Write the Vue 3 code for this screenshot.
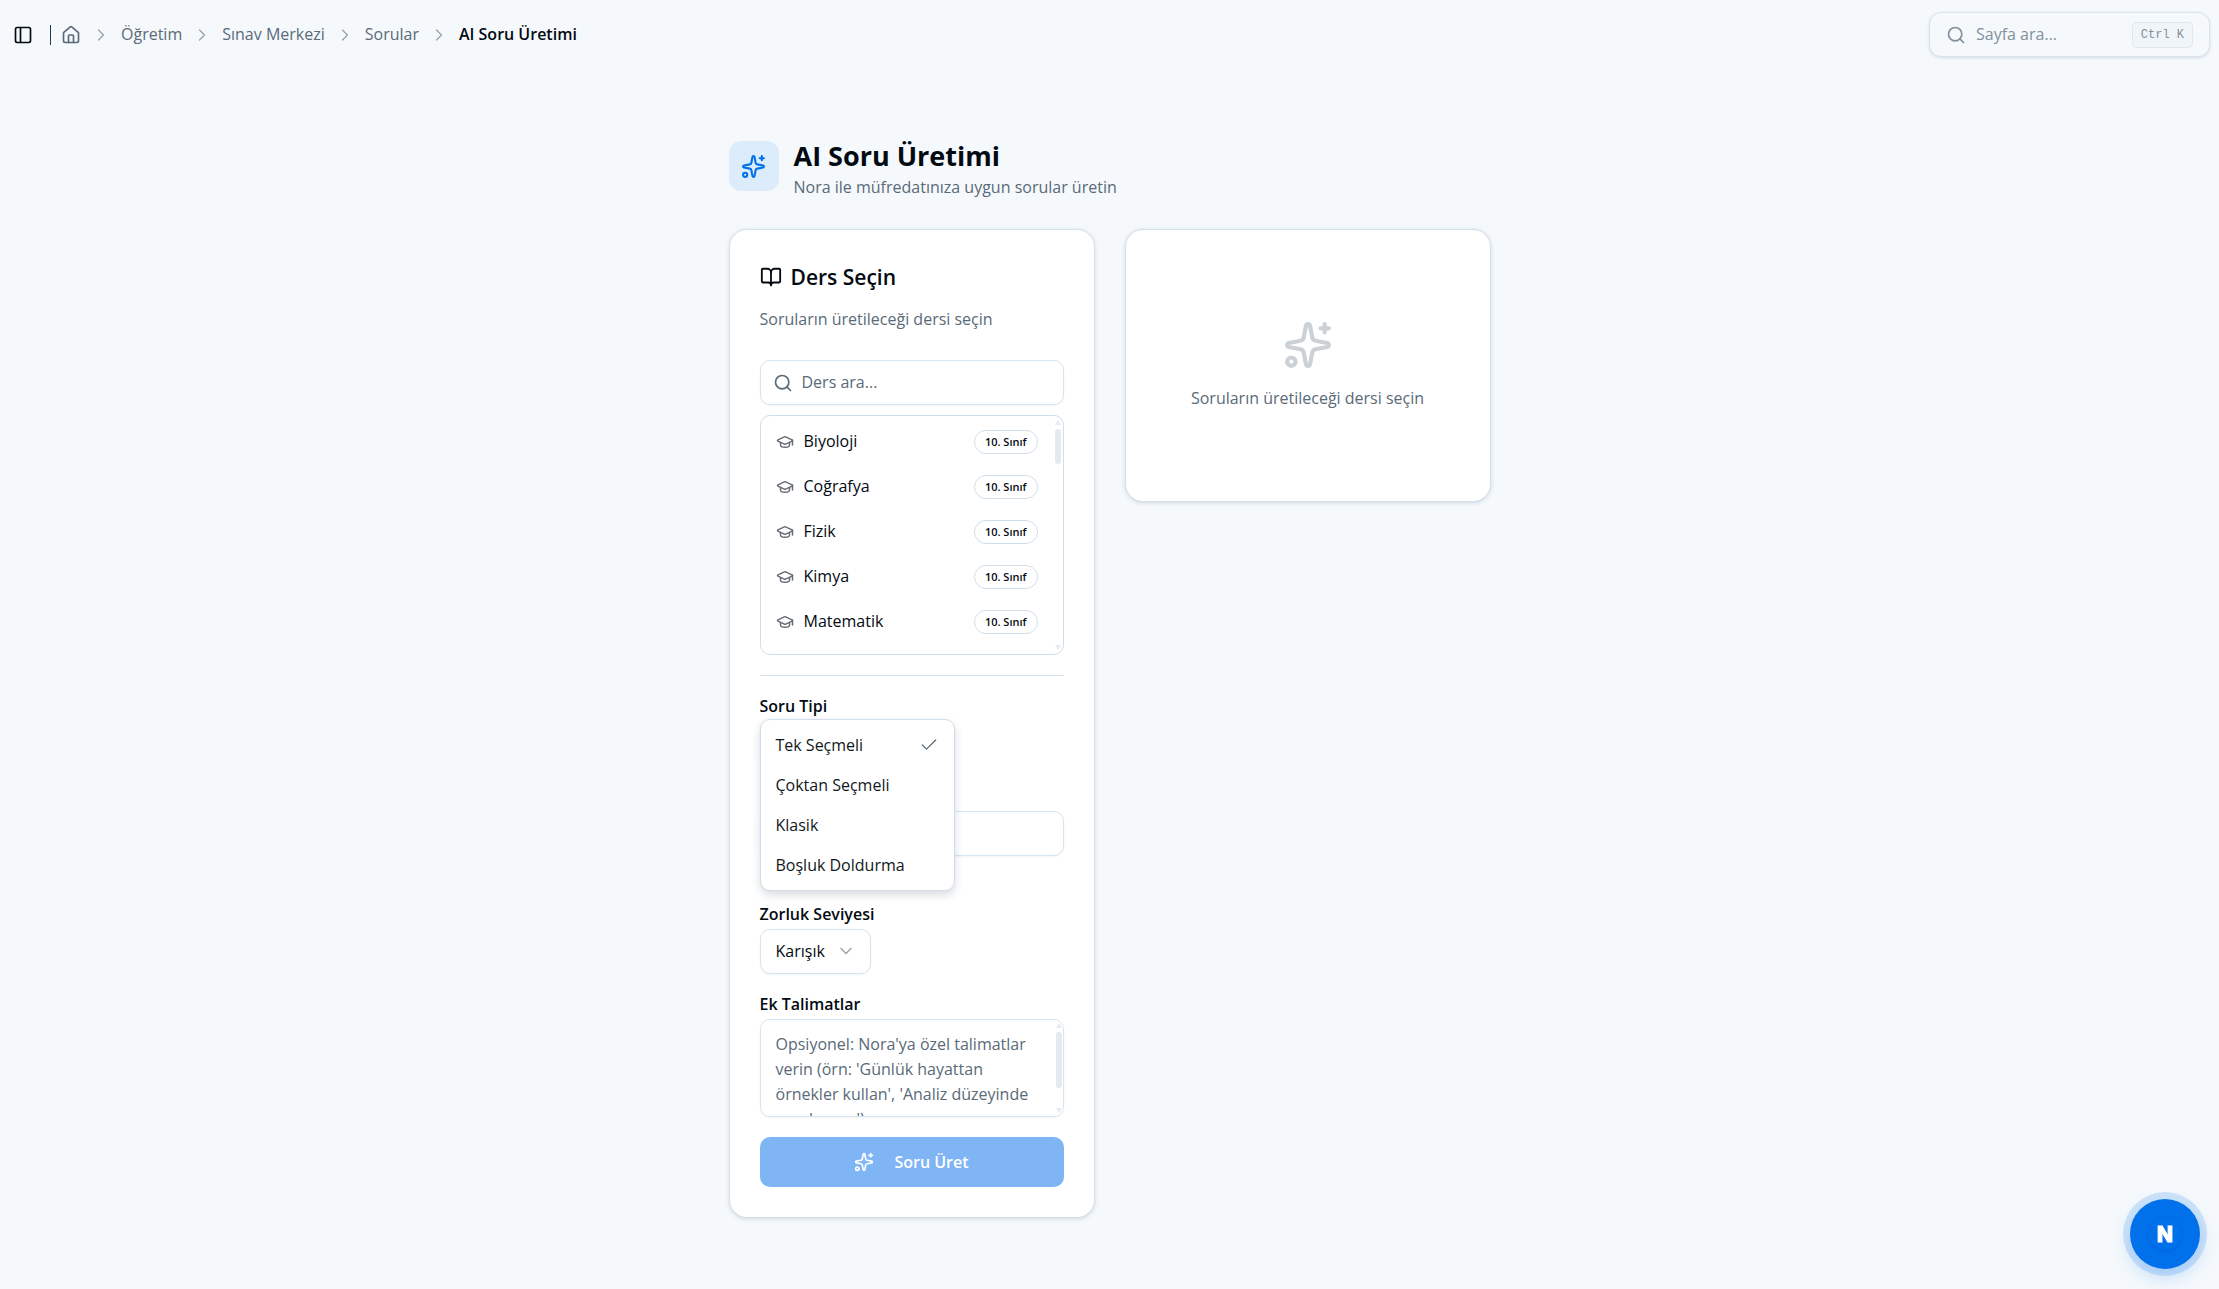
<script setup>
import { ref, computed } from 'vue'

const crumbs = ['Öğretim', 'Sınav Merkezi', 'Sorular']

const lessons = [
  { name: 'Biyoloji', grade: '10. Sınıf' },
  { name: 'Coğrafya', grade: '10. Sınıf' },
  { name: 'Fizik', grade: '10. Sınıf' },
  { name: 'Kimya', grade: '10. Sınıf' },
  { name: 'Matematik', grade: '10. Sınıf' }
]

const questionTypes = ['Tek Seçmeli', 'Çoktan Seçmeli', 'Klasik', 'Boşluk Doldurma']

const search = ref('')
const selectedLesson = ref(null)
const questionType = ref('Tek Seçmeli')
const typeMenuOpen = ref(true)
const questionCount = ref('')
const difficulty = ref('Karışık')
const instructions = ref('')

const filteredLessons = computed(() => {
  const term = search.value.toLocaleLowerCase('tr')
  return lessons.filter((l) => l.name.toLocaleLowerCase('tr').includes(term))
})

function pickType(type) {
  questionType.value = type
  typeMenuOpen.value = false
}
</script>

<template>
  <div class="app">
    <!-- shared icon shapes -->
    <svg class="sprite" aria-hidden="true">
      <symbol id="i-sparkles" viewBox="0 0 24 24">
        <path d="M11.017 2.814a1 1 0 0 1 1.966 0l1.051 5.558a2 2 0 0 0 1.594 1.594l5.558 1.051a1 1 0 0 1 0 1.966l-5.558 1.051a2 2 0 0 0-1.594 1.594l-1.051 5.558a1 1 0 0 1-1.966 0l-1.051-5.558a2 2 0 0 0-1.594-1.594l-5.558-1.051a1 1 0 0 1 0-1.966l5.558-1.051a2 2 0 0 0 1.594-1.594z" />
        <path d="M20 2v4M22 4h-4" />
        <circle cx="4" cy="20" r="2" />
      </symbol>
      <symbol id="i-search" viewBox="0 0 24 24">
        <circle cx="11" cy="11" r="8" />
        <path d="m21 21-4.3-4.3" />
      </symbol>
      <symbol id="i-chevron" viewBox="0 0 24 24">
        <path d="m9 18 6-6-6-6" />
      </symbol>
      <symbol id="i-cap" viewBox="0 0 24 24">
        <path d="M21.42 10.922a1 1 0 0 0-.019-1.838L12.83 5.18a2 2 0 0 0-1.66 0L2.6 9.08a1 1 0 0 0 0 1.832l8.57 3.908a2 2 0 0 0 1.66 0z" />
        <path d="M22 10v6" />
        <path d="M6 12.5V16a6 3 0 0 0 12 0v-3.5" />
      </symbol>
    </svg>

    <header class="topbar">
      <button class="icon-btn" aria-label="Kenar çubuğu">
        <svg class="icon" viewBox="0 0 24 24">
          <rect width="18" height="18" x="3" y="3" rx="2" />
          <path d="M9 3v18" />
        </svg>
      </button>
      <span class="divider"></span>
      <nav class="crumbs">
        <a href="#" class="crumb" aria-label="Ana sayfa">
          <svg class="icon" viewBox="0 0 24 24">
            <path d="M15 21v-8a1 1 0 0 0-1-1h-4a1 1 0 0 0-1 1v8" />
            <path d="M3 10a2 2 0 0 1 .709-1.528l7-5.999a2 2 0 0 1 2.582 0l7 5.999A2 2 0 0 1 21 10v9a2 2 0 0 1-2 2H5a2 2 0 0 1-2-2z" />
          </svg>
        </a>
        <template v-for="crumb in crumbs" :key="crumb">
          <svg class="icon crumb-sep"><use href="#i-chevron" /></svg>
          <a href="#" class="crumb">{{ crumb }}</a>
        </template>
        <svg class="icon crumb-sep"><use href="#i-chevron" /></svg>
        <span class="crumb-current" aria-current="page">AI Soru Üretimi</span>
      </nav>
      <button class="page-search">
        <svg class="icon"><use href="#i-search" /></svg>
        <span class="page-search-text">Sayfa ara...</span>
        <kbd>Ctrl K</kbd>
      </button>
    </header>

    <main class="content">
      <div class="page-head">
        <div class="page-icon">
          <svg class="icon icon-md"><use href="#i-sparkles" /></svg>
        </div>
        <div>
          <h1>AI Soru Üretimi</h1>
          <p class="page-sub">Nora ile müfredatınıza uygun sorular üretin</p>
        </div>
      </div>

      <div class="columns">
        <section class="card">
          <h2>
            <svg class="icon icon-book" viewBox="0 0 24 24">
              <path d="M12 7v14" />
              <path d="M3 18a1 1 0 0 1-1-1V4a1 1 0 0 1 1-1h5a4 4 0 0 1 4 4 4 4 0 0 1 4-4h5a1 1 0 0 1 1 1v13a1 1 0 0 1-1 1h-6a3 3 0 0 0-3 3 3 3 0 0 0-3-3z" />
            </svg>
            Ders Seçin
          </h2>
          <p class="card-sub">Soruların üretileceği dersi seçin</p>

          <label class="control lesson-search">
            <svg class="icon"><use href="#i-search" /></svg>
            <input v-model="search" type="text" placeholder="Ders ara..." aria-label="Ders ara" />
          </label>

          <div class="lesson-list">
            <button
              v-for="lesson in filteredLessons"
              :key="lesson.name"
              class="lesson"
              @click="selectedLesson = lesson.name"
            >
              <svg class="icon icon-cap"><use href="#i-cap" /></svg>
              <span class="lesson-name">{{ lesson.name }}</span>
              <span class="badge">{{ lesson.grade }}</span>
            </button>
            <div class="scroll" aria-hidden="true">
              <span class="arrow-up"></span>
              <span class="thumb thumb-list"></span>
              <span class="arrow-down"></span>
            </div>
          </div>

          <hr />

          <form class="form" @submit.prevent>
            <div class="field type-field">
              <label for="question-type">Soru Tipi</label>
              <button
                id="question-type"
                type="button"
                class="control type-trigger"
                aria-haspopup="listbox"
                :aria-expanded="typeMenuOpen"
                @click="typeMenuOpen = !typeMenuOpen"
              >
                <span v-if="!typeMenuOpen">{{ questionType }}</span>
              </button>
              <div v-if="typeMenuOpen" class="menu" role="listbox">
                <button
                  v-for="type in questionTypes"
                  :key="type"
                  type="button"
                  class="menu-item"
                  role="option"
                  :aria-selected="type === questionType"
                  @click="pickType(type)"
                >
                  {{ type }}
                  <svg v-if="type === questionType" class="icon" viewBox="0 0 24 24">
                    <path d="M20 6 9 17l-5-5" />
                  </svg>
                </button>
              </div>
            </div>

            <div class="count-field">
              <input v-model="questionCount" class="control" type="text" inputmode="numeric" aria-label="Soru sayısı" />
            </div>

            <div class="field">
              <label for="difficulty">Zorluk Seviyesi</label>
              <div class="select-wrap">
                <select id="difficulty" v-model="difficulty" class="control">
                  <option>Karışık</option>
                </select>
                <svg class="icon select-arrow"><use href="#i-chevron" /></svg>
              </div>
            </div>

            <div class="field">
              <label for="instructions">Ek Talimatlar</label>
              <div class="textarea-wrap">
                <textarea
                  id="instructions"
                  v-model="instructions"
                  class="control"
                  placeholder="Opsiyonel: Nora'ya özel talimatlar verin (örn: 'Günlük hayattan örnekler kullan', 'Analiz düzeyinde sorular sor')"
                ></textarea>
                <div class="scroll" aria-hidden="true">
                  <span class="arrow-up"></span>
                  <span class="thumb thumb-text"></span>
                  <span class="arrow-down"></span>
                </div>
              </div>
            </div>

            <button class="submit" :disabled="!selectedLesson">
              <svg class="icon"><use href="#i-sparkles" /></svg>
              Soru Üret
            </button>
          </form>
        </section>

        <section class="card empty">
          <svg class="icon icon-lg"><use href="#i-sparkles" /></svg>
          <p>Soruların üretileceği dersi seçin</p>
        </section>
      </div>
    </main>

    <button class="fab" aria-label="Nora">
      <span class="fab-inner">N</span>
    </button>
  </div>
</template>

<style>
body {
  background: #f5f9fc;
}
</style>

<style scoped>
.app {
  min-height: 100vh;
  font-family: 'Segoe UI', 'Open Sans', 'Noto Sans', sans-serif;
  font-size: 16px;
  line-height: 25px;
  color: #030a12;
}

.app *,
.app *::before {
  box-sizing: border-box;
}

button,
input,
select,
textarea {
  font: inherit;
  color: inherit;
}

button {
  cursor: pointer;
}

.sprite {
  position: absolute;
  width: 0;
  height: 0;
}

.icon {
  width: 20px;
  height: 20px;
  flex-shrink: 0;
  fill: none;
  stroke: currentColor;
  stroke-width: 2;
  stroke-linecap: round;
  stroke-linejoin: round;
}

.topbar {
  display: flex;
  align-items: center;
  height: 69px;
  padding: 0 9px 0 13px;
}

.icon-btn {
  display: flex;
  padding: 0;
  border: 0;
  background: none;
}

.divider {
  width: 1px;
  height: 20px;
  margin: 0 10px 0 17px;
  background: #1c3a52;
}

.crumbs {
  display: flex;
  align-items: center;
  gap: 10px;
  flex: 1;
}

.crumb {
  display: flex;
  color: #5a6a78;
  text-decoration: none;
}

.crumb-sep {
  color: #96a2ac;
  stroke-width: 1.5;
}

.crumb-current {
  font-weight: 600;
}

.page-search {
  display: flex;
  align-items: center;
  gap: 10px;
  width: 281px;
  height: 45px;
  padding: 0 16px;
  border: 1px solid #d8e4ee;
  border-radius: 12px;
  background: #f5f9fc;
  box-shadow: 0 1px 3px rgba(20, 50, 80, 0.14);
  color: #83909b;
  text-align: left;
}

.page-search-text {
  flex: 1;
}

kbd {
  padding: 0 8px;
  border: 1px solid #dfe8f0;
  border-radius: 5px;
  background: #f0f5f9;
  font-family: 'Liberation Mono', monospace;
  font-size: 12px;
  line-height: 24px;
}

.content {
  max-width: 762px;
  margin: 0 auto;
  padding: 68px 0 72px;
}

.page-head {
  display: flex;
  align-items: flex-start;
  gap: 15px;
  margin-bottom: 29px;
}

.page-icon {
  display: flex;
  align-items: center;
  justify-content: center;
  width: 50px;
  height: 50px;
  margin-top: 4px;
  border-radius: 12px;
  background: #dcecfa;
  color: #0070eb;
}

.icon-md {
  width: 25px;
  height: 25px;
}

h1 {
  margin: 0;
  font-size: 27px;
  font-weight: 700;
  line-height: 38px;
}

p {
  margin: 0;
}

.page-sub,
.card-sub {
  color: #5a6a78;
}

.columns {
  display: grid;
  grid-template-columns: 1fr 1fr;
  align-items: start;
  gap: 30px;
}

.card {
  padding: 30px;
  border: 1px solid #d3e0ea;
  border-radius: 18px;
  background: #fff;
  box-shadow: 0 1px 4px rgba(20, 50, 80, 0.16);
}

h2 {
  display: flex;
  align-items: center;
  gap: 9px;
  margin: 0 0 13px;
  font-size: 21px;
  font-weight: 600;
  line-height: 34px;
}

.icon-book {
  width: 22px;
  height: 22px;
}

.card-sub {
  margin-bottom: 28px;
}

.control {
  height: 45px;
  border: 1px solid #d8e4ee;
  border-radius: 10px;
  background: #fff;
  box-shadow: 0 1px 2px rgba(20, 50, 80, 0.05);
  outline: none;
}

.lesson-search {
  display: flex;
  align-items: center;
  gap: 9px;
  margin-bottom: 10px;
  padding: 0 12px;
  color: #5a6a78;
}

.lesson-search input {
  flex: 1;
  min-width: 0;
  padding: 0;
  border: 0;
  outline: none;
  background: none;
}

::placeholder {
  color: #5a6a78;
  opacity: 1;
}

.lesson-list {
  position: relative;
  height: 240px;
  padding: 3px 2px;
  border: 1px solid #d0deea;
  border-radius: 10px;
  overflow: hidden;
}

.lesson {
  display: flex;
  align-items: center;
  gap: 10px;
  width: 100%;
  height: 45px;
  padding: 0 23px 0 13px;
  border: 0;
  background: none;
  text-align: left;
}

.icon-cap {
  width: 18px;
  height: 18px;
  color: #666d75;
}

.lesson-name {
  flex: 1;
}

.badge {
  padding: 0 10px;
  border: 1px solid #d0deea;
  border-radius: 12px;
  font-size: 11px;
  font-weight: 600;
  line-height: 22px;
}

/* slim scroll track drawn over the right edge */
.scroll {
  position: absolute;
  top: 4px;
  right: 2px;
  bottom: 4px;
  display: flex;
  flex-direction: column;
  align-items: center;
  width: 6px;
}

.arrow-up,
.arrow-down {
  border: 3px solid transparent;
}

.arrow-up {
  margin-top: -3px;
  border-bottom: 5px solid #e4eaf1;
}

.arrow-down {
  margin-top: auto;
  margin-bottom: -3px;
  border-top: 5px solid #e4eaf1;
}

.thumb {
  width: 6px;
  margin-top: 4px;
  border-radius: 3px;
  background: #e4eaf1;
}

.thumb-list {
  height: 35px;
}

.thumb-text {
  height: 56px;
}

hr {
  height: 1px;
  margin: 20px 0;
  border: 0;
  background: #d3e0ea;
}

.form {
  display: flex;
  flex-direction: column;
  gap: 20px;
}

.field label {
  display: block;
  margin-bottom: 5px;
  font-weight: 600;
  line-height: 20px;
}

.type-field {
  position: relative;
}

.type-trigger {
  display: block;
  width: 160px;
}

.menu {
  position: absolute;
  top: 23px;
  left: 0;
  z-index: 10;
  width: 195px;
  padding: 5px;
  border: 1px solid #d0deea;
  border-radius: 10px;
  background: #fff;
  box-shadow: 0 4px 8px rgba(20, 40, 60, 0.16);
}

.menu-item {
  display: flex;
  align-items: center;
  justify-content: space-between;
  width: 100%;
  height: 40px;
  padding: 0 10px;
  border: 0;
  border-radius: 6px;
  background: none;
  color: #111820;
}

.menu-item .icon {
  color: #5a6a78;
  stroke-width: 1.5;
}

.menu-item:hover {
  background: #eef4fa;
}

.count-field {
  padding: 25px 0 28px;
}

.count-field input {
  display: block;
  width: 100%;
  padding: 0 15px;
}

.select-wrap {
  position: relative;
  width: 111px;
}

.select-wrap select {
  display: block;
  width: 100%;
  padding: 0 15px;
  appearance: none;
}

.select-arrow {
  position: absolute;
  top: 12px;
  right: 15px;
  color: #a0aab3;
  transform: rotate(90deg);
  pointer-events: none;
}

.textarea-wrap {
  position: relative;
}

.textarea-wrap textarea {
  display: block;
  width: 100%;
  height: 98px;
  padding: 12px 20px 10px 15px;
  line-height: 25px;
  resize: none;
}

.submit {
  display: flex;
  align-items: center;
  justify-content: center;
  gap: 20px;
  height: 50px;
  border: 0;
  border-radius: 10px;
  background: #0070eb;
  color: #fff;
  font-weight: 600;
}

.submit:disabled {
  background: #7fb5f5;
  cursor: default;
}

.empty {
  display: flex;
  flex-direction: column;
  align-items: center;
  gap: 16px;
  padding: 90px 30px;
  color: #5a6a78;
}

.icon-lg {
  width: 50px;
  height: 50px;
  color: #ccd1d6;
}

.fab {
  position: fixed;
  right: 19px;
  bottom: 20px;
  display: flex;
  align-items: center;
  justify-content: center;
  width: 70px;
  height: 70px;
  padding: 0;
  border: 0;
  border-radius: 50%;
  background: #0070eb;
  box-shadow: 0 0 0 7px rgba(0, 112, 235, 0.16), 0 8px 20px rgba(0, 112, 235, 0.22);
}

.fab-inner {
  display: flex;
  align-items: center;
  justify-content: center;
  width: 32px;
  height: 32px;
  border-radius: 50%;
  box-shadow: 0 1px 4px rgba(0, 40, 120, 0.16);
  color: #fff;
  font-family: Inter, sans-serif;
  font-size: 21px;
  font-weight: 800;
  -webkit-text-stroke: 1px #fff;
}
</style>
